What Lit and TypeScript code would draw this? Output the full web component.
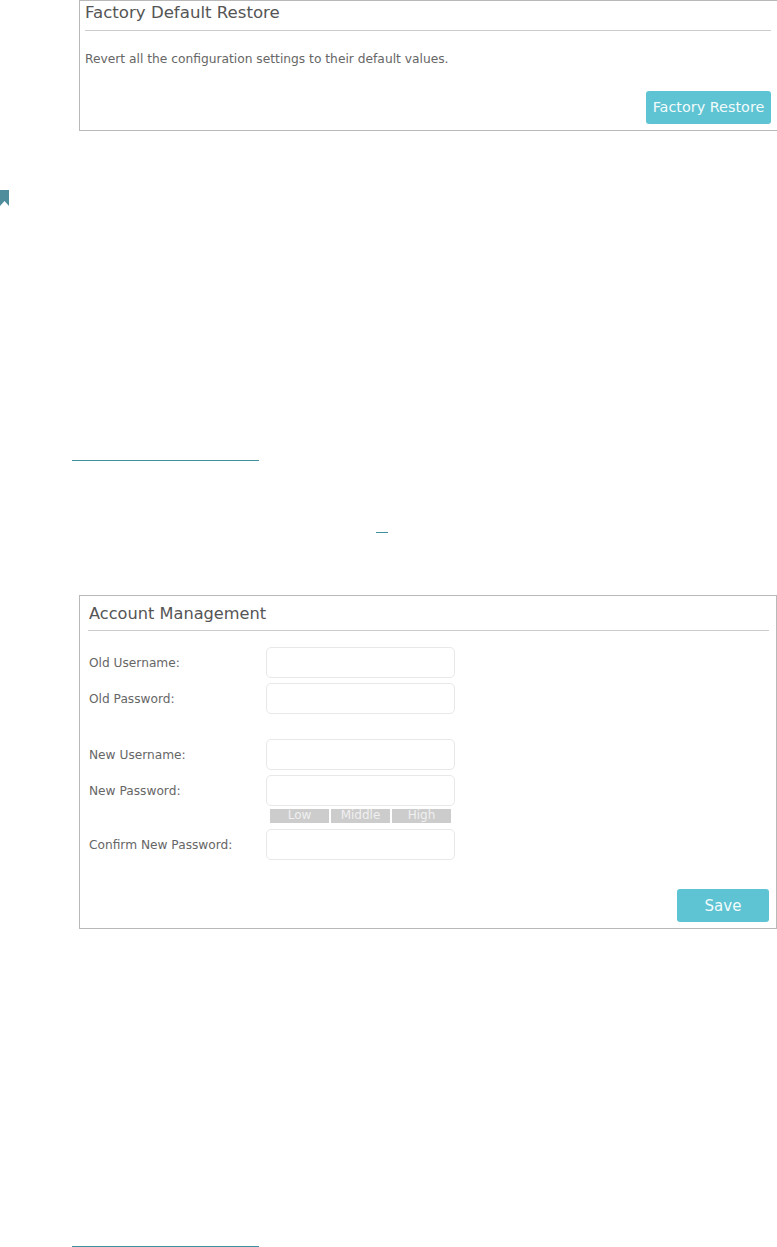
import { LitElement, html, css } from "lit";
import { customElement } from "lit/decorators.js";

@customElement("app-root")
export class AppRoot extends LitElement {
  static styles = css`
    :host { display: block; width: 777px; height: 1247px; background: #fff; overflow: hidden; font-family: "DejaVu Sans", sans-serif; color: #666; }
    .page { display: flex; flex-direction: column; }
    .card { box-sizing: border-box; margin-left: 79px; border: 1px solid #b9b9b9; background: #fff; display: flex; flex-direction: column; }
    .card1 { height: 131px; width: 699px; border-right: 0; padding: 0 7px 6px 5px; margin-bottom: 59px; }
    .card2 { height: 334px; width: 698px; padding: 0 7px 6px 8px; margin-top: 62px; }
    .title { color: #555; border-bottom: 1px solid #ccc; }
    .card1 .title { font-size: 16.6px; height: 29px; line-height: 23px; }
    .card2 .title { font-size: 16.2px; height: 34px; line-height: 36px; text-indent: 1px; }
    .desc { font-size: 12.25px; line-height: 16px; margin-top: 20px; color: #666; }
    .actions { margin-top: auto; display: flex; justify-content: flex-end; }
    .btn { box-sizing: border-box; background: #5ec3d2; color: #f2fbfc; border-radius: 3px; display: flex; align-items: center; justify-content: center; height: 33px; }
    .restore { width: 125px; font-size: 14.4px; padding-bottom: 2px; }
    .save { width: 92px; font-size: 15px; }
    .bookmark { display: block; width: 9px; height: 16px; }
    .rule { height: 1px; background: #3f8f9e; }
    .rule-a { width: 187px; margin: 254px 0 0 72px; }
    .rule-b { width: 12px; margin: 71px 0 0 376px; }
    .rule-c { width: 187px; margin: 317px 0 0 72px; }
    .form { display: flex; flex-direction: column; margin-top: 16px; }
    .row { display: grid; grid-template-columns: 178px 189px; align-items: start; font-size: 12.2px; }
    .row label { line-height: 16px; padding: 8px 0 0 1px; }
    .input { box-sizing: border-box; height: 31px; border: 1px solid #e8e8e8; border-radius: 5px; background: #fff; }
    .gap5 { margin-top: 5px; }
    .gap6 { margin-top: 6px; }
    .gap25 { margin-top: 25px; }
    .meter { display: flex; gap: 2px; margin: 3px 4px 0 4px; }
    .meter span { flex: 1; height: 14px; background: #ccc; color: #f0f0f0; font-size: 12px; line-height: 13px; text-align: center; }
    .right { display: flex; flex-direction: column; }
  `;

  private row(label: string, cls = "", meter = false) {
    return html`<div class="row ${cls}">
      <label>${label}</label>
      <div class="right">
        <div class="input"></div>
        ${meter ? html`<div class="meter"><span>Low</span><span>Middle</span><span>High</span></div>` : ""}
      </div>
    </div>`;
  }

  render() {
    return html`<div class="page">
      <section class="card card1">
        <div class="title">Factory Default Restore</div>
        <div class="desc">Revert all the configuration settings to their default values.</div>
        <div class="actions"><div class="btn restore">Factory Restore</div></div>
      </section>
      <svg class="bookmark" viewBox="0 0 9 16" aria-hidden="true"><path d="M0 0H9V16L4.5 11 0 16Z" fill="#4f8d9c"/></svg>
      <div class="rule rule-a"></div>
      <div class="rule rule-b"></div>
      <section class="card card2">
        <div class="title">Account Management</div>
        <div class="form">
          ${this.row("Old Username:")}
          ${this.row("Old Password:", "gap5")}
          ${this.row("New Username:", "gap25")}
          ${this.row("New Password:", "gap5", true)}
          ${this.row("Confirm New Password:", "gap6")}
        </div>
        <div class="actions"><div class="btn save">Save</div></div>
      </section>
      <div class="rule rule-c"></div>
    </div>`;
  }
}
